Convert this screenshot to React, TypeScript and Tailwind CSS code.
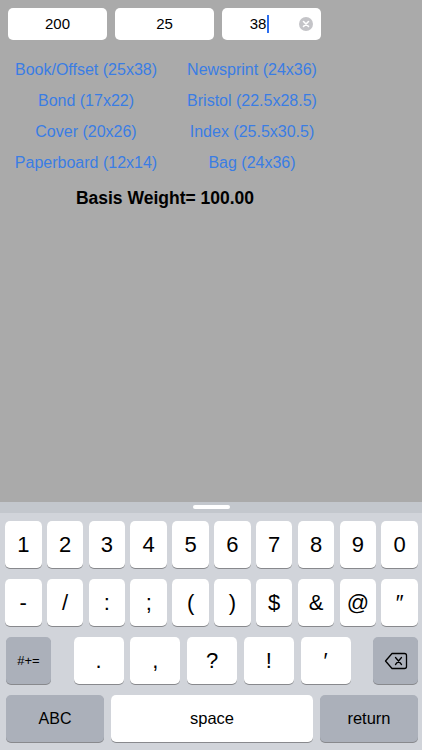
import React from "react";

const links: [string, string][] = [
  ["Book/Offset (25x38)", "Newsprint (24x36)"],
  ["Bond (17x22)", "Bristol (22.5x28.5)"],
  ["Cover (20x26)", "Index (25.5x30.5)"],
  ["Paperboard (12x14)", "Bag (24x36)"],
];

const row1 = ["1", "2", "3", "4", "5", "6", "7", "8", "9", "0"];
const row2 = ["-", "/", ":", ";", "(", ")", "$", "&", "@", "″"];
const row3 = [".", ",", "?", "!", "′"];

function Key({ label, className = "" }: { label: string; className?: string }) {
  return (
    <div
      className={`h-[47px] rounded-[5px] bg-white shadow-[0_1px_0_#88898d] flex items-center justify-center text-[22px] text-black ${className}`}
    >
      {label}
    </div>
  );
}

export default function App() {
  return (
    <div className="w-[422px] h-[750px] bg-[#aaaaaa] flex flex-col overflow-hidden font-['Liberation_Sans',Arial,sans-serif]">
      <div className="flex-1">
        <div className="flex gap-[8px] pl-[8px] pt-[8px]">
          <div className="w-[99px] h-[32px] rounded-[5px] bg-white flex items-center justify-center text-[15px] text-black">
            200
          </div>
          <div className="w-[99px] h-[32px] rounded-[5px] bg-white flex items-center justify-center text-[15px] text-black">
            25
          </div>
          <div className="w-[99px] h-[32px] rounded-[5px] bg-white flex items-center text-[15px] text-black">
            <div className="flex-1 flex items-center justify-center pl-[4px]">
              <span>38</span>
              <span className="w-[2px] h-[18px] bg-[#2d6ff0] ml-[1px]" />
            </div>
            <div className="w-[28px] flex items-center justify-center pr-[2px]">
              <div className="w-[14px] h-[14px] rounded-full bg-[#c4c4c8] flex items-center justify-center">
                <svg width="8" height="8" viewBox="0 0 8 8">
                  <path d="M1.5 1.5 L6.5 6.5 M6.5 1.5 L1.5 6.5" stroke="white" strokeWidth="1.6" strokeLinecap="round" />
                </svg>
              </div>
            </div>
          </div>
        </div>
        <div className="grid grid-cols-2 w-[332px] ml-[3px] mt-[14px]">
          {links.map(([a, b]) => (
            <React.Fragment key={a}>
              <div className="h-[31px] flex items-center justify-center text-[16px] text-[#3a7de4]">{a}</div>
              <div className="h-[31px] flex items-center justify-center text-[16px] text-[#3a7de4]">{b}</div>
            </React.Fragment>
          ))}
        </div>
        <div className="w-[330px] text-center mt-[8px] text-[17.5px] leading-[24px] font-bold text-black">
          Basis Weight= 100.00
        </div>
      </div>
      <div className="h-[248px] bg-[#d1d4da] flex flex-col">
        <div className="h-[11px] bg-[#c3c7cd] flex justify-center pt-[3px]">
          <div className="w-[37px] h-[4px] rounded-full bg-white" />
        </div>
        <div className="pt-[8px] flex flex-col gap-[11px]">
          <div className="flex justify-between pl-[5px] pr-[4px]">
            {row1.map((k) => (
              <Key key={k} label={k} className="w-[36.5px]" />
            ))}
          </div>
          <div className="flex justify-between pl-[5px] pr-[4px]">
            {row2.map((k) => (
              <Key key={k} label={k} className="w-[36.5px]" />
            ))}
          </div>
          <div className="flex justify-between pl-[6px] pr-[4px]">
            <div className="w-[45px] h-[47px] rounded-[5px] bg-[#abb0ba] shadow-[0_1px_0_#88898d] flex items-center justify-center text-[13px] text-black">
              #+=
            </div>
            <div className="w-[277px] flex justify-between">
              {row3.map((k) => (
                <Key key={k} label={k} className="w-[50px]" />
              ))}
            </div>
            <div className="w-[45px] h-[47px] rounded-[5px] bg-[#abb0ba] shadow-[0_1px_0_#88898d] flex items-center justify-center">
              <svg width="24" height="18" viewBox="0 0 24 18" fill="none">
                <path
                  d="M8 1.5 H20.5 a2 2 0 0 1 2 2 V14.5 a2 2 0 0 1 -2 2 H8 L1.5 9 Z"
                  stroke="black"
                  strokeWidth="1.3"
                  strokeLinejoin="round"
                />
                <path d="M11.5 5.5 L17.5 12.5 M17.5 5.5 L11.5 12.5" stroke="black" strokeWidth="1.3" strokeLinecap="round" />
              </svg>
            </div>
          </div>
          <div className="flex gap-[7px] pl-[6px] pr-[4px]">
            <div className="w-[98px] h-[47px] rounded-[5px] bg-[#abb0ba] shadow-[0_1px_0_#88898d] flex items-center justify-center text-[16px] text-black">
              ABC
            </div>
            <div className="w-[202px] h-[47px] rounded-[5px] bg-white shadow-[0_1px_0_#88898d] flex items-center justify-center text-[16.5px] text-black">
              space
            </div>
            <div className="w-[98px] h-[47px] rounded-[5px] bg-[#abb0ba] shadow-[0_1px_0_#88898d] flex items-center justify-center text-[16.5px] text-black">
              return
            </div>
          </div>
        </div>
      </div>
    </div>
  );
}
